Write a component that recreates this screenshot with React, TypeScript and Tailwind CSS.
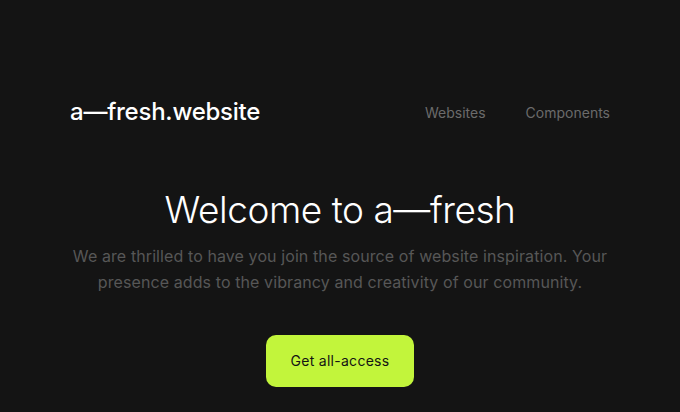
export default function App() {
  return (
    <main
      className="min-h-screen bg-[#141414] px-[70px] pt-[96px]"
      style={{ fontFamily: "Inter, 'Noto Sans', sans-serif" }}
    >
      {/* Header */}
      <header className="flex h-8 items-center justify-between">
        <a className="text-[24px] font-medium leading-8 tracking-[-0.01em] text-white">
          a—fresh.website
        </a>
        <nav className="flex items-center gap-10 pt-0.5 text-sm text-[#6b6b6b]">
          <a>Websites</a>
          <a>Components</a>
        </nav>
      </header>

      {/* Hero */}
      <section className="mt-[59px] flex flex-col items-center text-center">
        <h1 className="text-[37px] font-light leading-[46px] tracking-[-0.012em] text-white">
          Welcome to a—fresh
        </h1>
        <p className="-mx-4 mt-[10px] max-w-[556px] text-base leading-[26px] tracking-[0.006em] text-[#575757]">
          We are thrilled to have you join the source of website inspiration. Your presence adds
          to the vibrancy and creativity of our community.
        </p>
        <button className="mt-10 h-[52px] w-[148px] rounded-[10px] bg-[#c2f53b] text-sm tracking-[0.02em] text-[#141414]">
          Get all-access
        </button>
      </section>
    </main>
  );
}
